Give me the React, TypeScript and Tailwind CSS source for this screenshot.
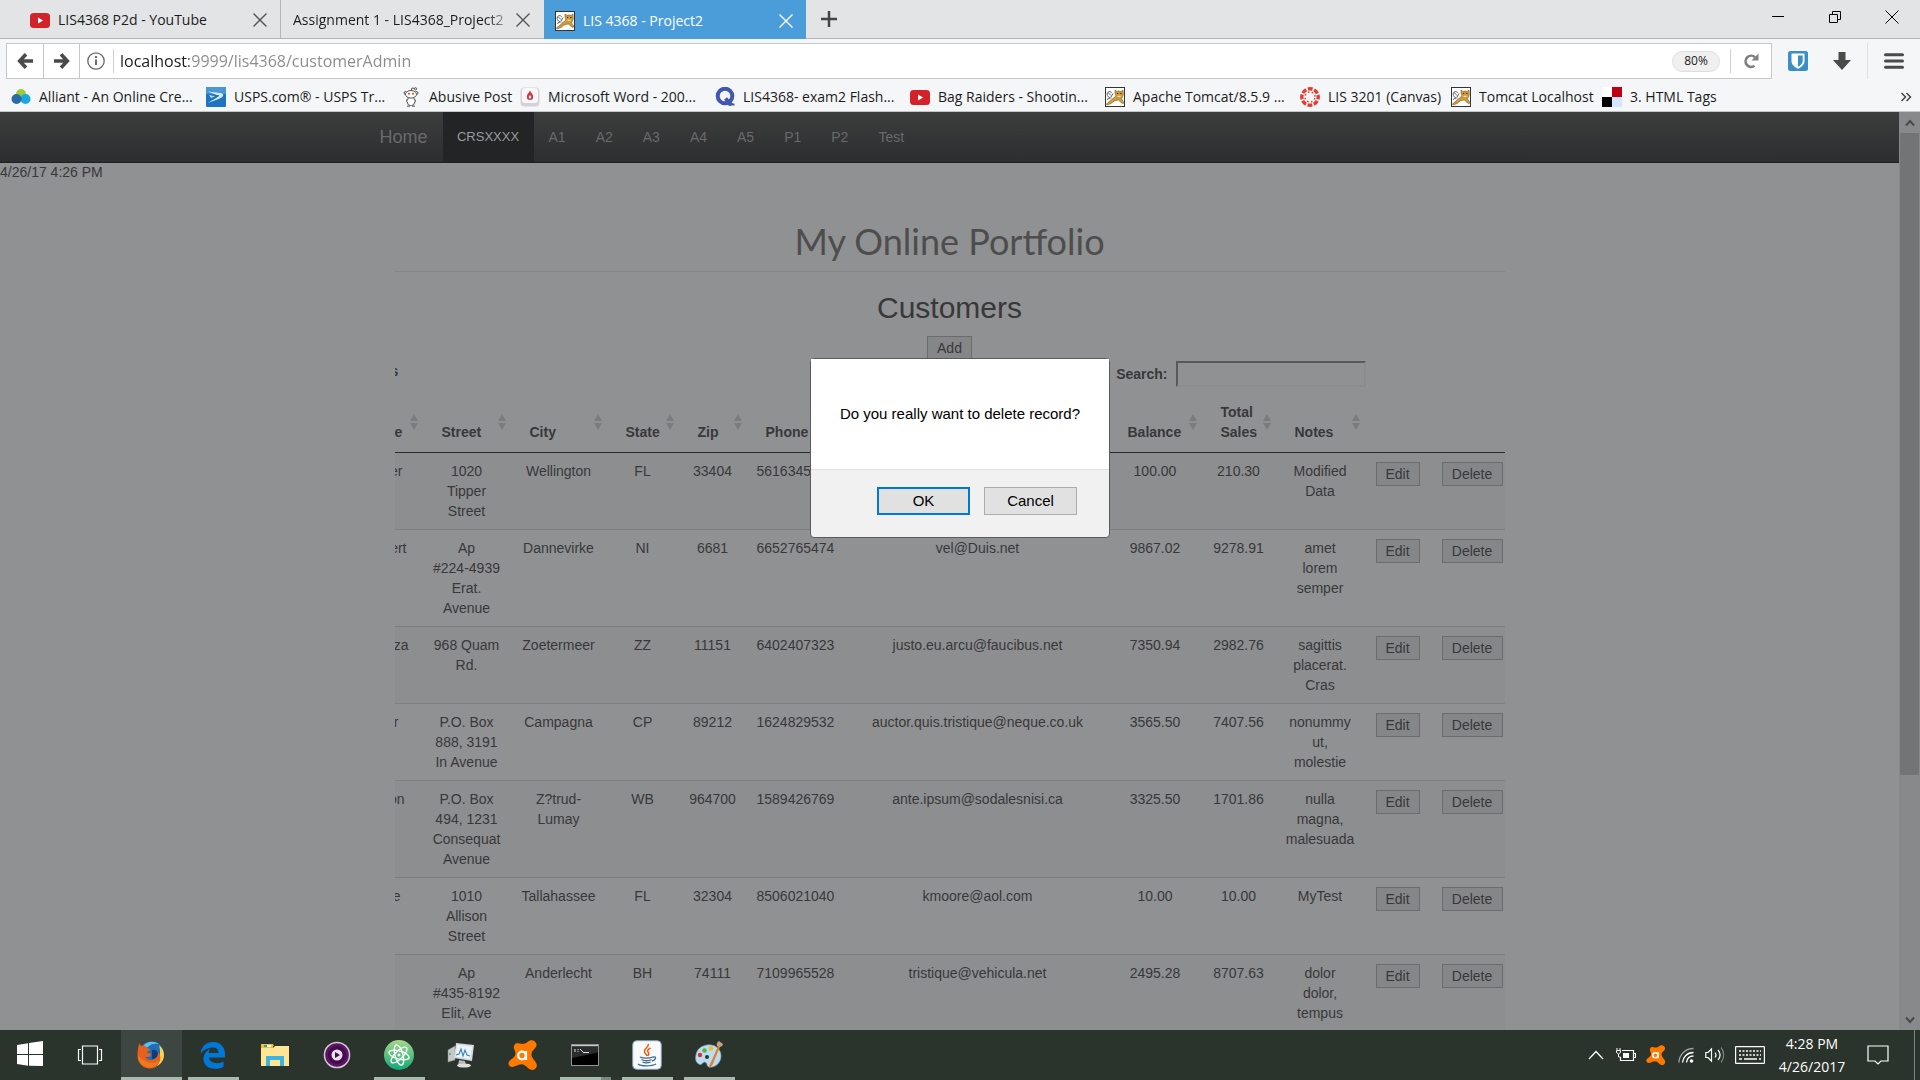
import React from "react";

type IconProps = { className?: string };

const YouTubeIcon = () => (
  <svg viewBox="0 0 20 15" className="h-[15px] w-5 shrink-0" aria-hidden="true">
    <rect width="20" height="15" rx="3.5" fill="#d3222a" />
    <path d="M8 4.5v6l5-3z" fill="#fff" />
  </svg>
);

const TomcatIcon = () => (
  <svg viewBox="0 0 20 20" className="size-5 shrink-0" aria-hidden="true">
    <rect x="0.5" y="0.5" width="19" height="19" fill="#fff" stroke="#333" />
    <path d="M6.500 11C3 11 1.500 8 2.500 6S6 4 6.500 6M3 5.500l3 3M8 6.500L6 10M2 12.500l3-1.500" fill="none" stroke="#4a4a4a" strokeWidth="0.9" />
    <path d="M10 3l2 1.500c1-.6 3-.6 4 0L18 3l.3 4c0 2-1 3.500-2 4.500l3 4.500-2 .5-4-3.500c-3 .5-5 1-7 3.500L2 18l-.5-1.200L5 14l4-3.500 2-1.500C10 7.500 9.800 5 10 3z" fill="#d09a3a" stroke="#6b4f1e" strokeWidth="0.5" />
    <path d="M12 6.500h1.200M15.200 6.500h1.200" stroke="#222" strokeWidth="1.100" />
    <path d="M12.500 9.300h3" stroke="#fff" strokeWidth="0.9" />
  </svg>
);

const AlliantIcon = () => (
  <svg viewBox="0 0 20 20" className="size-5 shrink-0" aria-hidden="true">
    <circle cx="10" cy="7" r="5" fill="#9ccb3c" />
    <circle cx="5.500" cy="12" r="5" fill="#2f68a6" />
    <circle cx="14.500" cy="12" r="5" fill="#1aa7e0" />
    <path d="M10 9.800a5 5 0 0 1 0 4.600a5 5 0 0 1 0-4.600z" fill="#1c4f87" />
  </svg>
);

const UspsIcon = () => (
  <svg viewBox="0 0 20 20" className="size-5 shrink-0" aria-hidden="true">
    <rect width="20" height="20" rx="1" fill="#1f74c0" />
    <rect width="20" height="7" rx="1" fill="#4b97d6" />
    <path d="M2 4.500l12 1.500c4 .6 4 3 1.500 4.500C12 12.500 7 14 2 16c4-2.800 7.500-4.500 10.500-6.500 1.500-1.300 0-1.500-2-1.500z" fill="#d6e9f7" />
    <path d="M3 8l6 1.300-4 1.700z" fill="#bcdcf3" />
  </svg>
);

const RedditIcon = () => (
  <svg viewBox="0 0 20 20" className="size-5 shrink-0" fill="#fff" stroke="#444" strokeWidth="0.9" aria-hidden="true">
    <path d="M10 4l1-3 3 .5" fill="none" />
    <circle cx="14.500" cy="1.800" r="1.100" />
    <circle cx="4.500" cy="6" r="1.500" />
    <circle cx="15.500" cy="6" r="1.500" />
    <rect x="6.500" y="10" width="7" height="8.500" rx="3" />
    <ellipse cx="10" cy="7.300" rx="5.500" ry="3.800" />
    <path d="M6 19.200h3M11 19.200h3M6.500 12c-1.500 1-1 4 .3 4M13.500 12c1.500 1 1 4-.3 4" />
    <circle cx="8" cy="6.800" r="1" fill="#ff4500" stroke="none" />
    <circle cx="12" cy="6.800" r="1" fill="#ff4500" stroke="none" />
  </svg>
);

const WordIcon = () => (
  <svg viewBox="0 0 20 20" className="size-5 shrink-0" aria-hidden="true">
    <rect x="0.500" y="0.500" width="19" height="19" rx="4" fill="#d3d2da" />
    <rect x="2" y="1" width="16" height="15" rx="3" fill="#f7f6f8" />
    <path d="M10 3.500c1 2.500 3.200 3.600 3.200 6.200a3.200 3.200 0 0 1-6.400 0C6.800 7.100 9 6 10 3.500z" fill="#c93b40" />
    <path d="M10 8c.6 1 1.200 1.300 1.200 2.300a1.200 1.200 0 0 1-2.400 0C8.800 9.300 9.400 9 10 8z" fill="#fff" />
  </svg>
);

const QuizletIcon = () => (
  <svg viewBox="0 0 20 20" className="size-5 shrink-0" fill="none" stroke="#4257b2" strokeWidth="4" aria-hidden="true">
    <circle cx="10" cy="9" r="7.300" />
    <path d="M10.500 11.500l6 6.500" />
    <path d="M13 17.500h6.500" strokeWidth="2" />
  </svg>
);

const CanvasIcon = () => (
  <svg viewBox="0 0 20 20" className="size-5 shrink-0" aria-hidden="true">
    <circle cx="10" cy="10" r="8.200" fill="none" stroke="#e8392f" strokeWidth="3.400" strokeDasharray="4.800 1.640" strokeDashoffset="2.400" />
    <circle cx="10" cy="10" r="5" fill="none" stroke="#e8392f" strokeWidth="1.500" strokeDasharray="1.500 2.427" strokeDashoffset="-1.200" />
  </svg>
);

const TagsIcon = () => (
  <svg viewBox="0 0 20 20" className="size-5 shrink-0" aria-hidden="true">
    <rect width="10" height="10" fill="#fff" />
    <rect x="10" width="10" height="10" fill="#c00012" />
    <rect y="10" width="10" height="10" fill="#000" />
    <rect x="10" y="10" width="10" height="10" fill="#d3e4fd" />
  </svg>
);

const CloseIcon = ({ className = "" }: IconProps) => (
  <svg viewBox="0 0 14 14" className={"size-[14px] shrink-0 " + className} fill="none" stroke="currentColor" strokeWidth="1.400" aria-hidden="true">
    <path d="M0.500 0.500l13 13M13.500 0.500l-13 13" />
  </svg>
);

const ArrowIcon = ({ className = "" }: IconProps) => (
  <svg viewBox="0 0 16 16" className={"size-4 " + className} fill="none" stroke="#4a4a4a" strokeWidth="3.600" aria-hidden="true">
    <path d="M9 1.200L2.700 8 9 14.800M3.500 8H16" />
  </svg>
);

const bookmarks = [
  { label: "Alliant - An Online Cre...", icon: AlliantIcon, width: "w-[195px]" },
  { label: "USPS.com® - USPS Tr...", icon: UspsIcon, width: "w-[195px]" },
  { label: "Abusive Post", icon: RedditIcon, width: "w-[119px]" },
  { label: "Microsoft Word - 200...", icon: WordIcon, width: "w-[195px]" },
  { label: "LIS4368- exam2 Flash...", icon: QuizletIcon, width: "w-[195px]" },
  { label: "Bag Raiders - Shootin...", icon: YouTubeIcon, width: "w-[195px]" },
  { label: "Apache Tomcat/8.5.9 ...", icon: TomcatIcon, width: "w-[195px]" },
  { label: "LIS 3201 (Canvas)", icon: CanvasIcon, width: "w-[151px]" },
  { label: "Tomcat Localhost", icon: TomcatIcon, width: "w-[151px]" },
  { label: "3. HTML Tags", icon: TagsIcon, width: "w-[120px]" },
];

function TabBar() {
  return (
    <div className="flex h-[39px] items-stretch border-b border-[#b4b5b8] bg-[#e3e4e6] text-sm text-[#1c1c1c]">
      <div className="flex w-[281px] items-center border-r border-[#b4b5b8] pl-[30px] pr-[13px] pt-0.5">
        <YouTubeIcon />
        <span className="ml-2 flex-1 whitespace-nowrap">LIS4368 P2d - YouTube</span>
        <button aria-label="Close tab" className="text-[#555]"><CloseIcon /></button>
      </div>
      <div className="flex w-[263px] items-center pl-3 pr-[14px] pt-0.5">
        <span className="mr-2 flex-1 overflow-hidden whitespace-nowrap bg-linear-to-r from-[#1c1c1c] from-90% to-[#b8b8b8] bg-clip-text text-transparent">Assignment 1 - LIS4368_Project2</span>
        <button aria-label="Close tab" className="text-[#555]"><CloseIcon /></button>
      </div>
      <div className="-mb-px flex w-[262px] items-center bg-[#4b9dd9] pl-[11px] pr-[13px] pt-0.5 text-white">
        <TomcatIcon />
        <span className="ml-2 flex-1 whitespace-nowrap">LIS 4368 - Project2</span>
        <button aria-label="Close tab"><CloseIcon /></button>
      </div>
      <button aria-label="New tab" className="ml-[15px]">
        <svg viewBox="0 0 16 16" className="size-4" stroke="#444" strokeWidth="2.500" aria-hidden="true"><path d="M8 0v16M0 8h16" /></svg>
      </button>
      <div className="ml-auto flex items-center gap-[43px] pb-1 pr-[21px]">
        <button aria-label="Minimize">
          <svg viewBox="0 0 14 14" className="size-[14px]" stroke="#000" aria-hidden="true"><path d="M1 6.500h12" /></svg>
        </button>
        <button aria-label="Restore">
          <svg viewBox="0 0 14 14" className="size-[14px]" fill="none" stroke="#000" aria-hidden="true"><path d="M1.500 4.500h8v8h-8zM4.500 4V1.500h8v8H10" /></svg>
        </button>
        <button aria-label="Close window">
          <svg viewBox="0 0 14 14" className="size-[14px]" fill="none" stroke="#000" aria-hidden="true"><path d="M0.500 0.500l13 13M13.500 0.500l-13 13" /></svg>
        </button>
      </div>
    </div>
  );
}

function Toolbar() {
  return (
    <div className="flex h-11 items-start bg-[#f5f6f8] pl-1.5 pt-1">
      <div className="flex h-9 flex-1 items-center border border-[#c6c7c9] bg-white">
        <button aria-label="Back" className="flex h-full w-[37px] items-center justify-center border-r border-[#c6c7c9]"><ArrowIcon /></button>
        <button aria-label="Forward" className="flex h-full w-9 items-center justify-center border-r border-[#c6c7c9]"><ArrowIcon className="rotate-180" /></button>
        <svg viewBox="0 0 18 18" className="ml-[7px] size-[18px]" fill="none" stroke="#6a6a6a" strokeWidth="1.300" aria-hidden="true">
          <circle cx="9" cy="9" r="8.200" /><path d="M9 7.500v5.500M9 4v2" strokeWidth="2" />
        </svg>
        <div className="ml-2 h-6 w-px bg-[#d0d0d0]" />
        <input
          type="text"
          aria-label="Address"
          defaultValue="localhost:9999/lis4368/customerAdmin"
          className="ml-1.5 h-8 flex-1 bg-[linear-gradient(90deg,#1c1c1c_69px,#8a8a8a_69px)] bg-clip-text text-base text-transparent outline-none"
        />
        <button className="h-[21px] w-12 rounded-full border border-[#dedede] bg-[#f0f0f0] text-xs leading-none text-[#222]">80%</button>
        <div className="ml-2.5 h-6 w-px bg-[#d0d0d0]" />
        <button aria-label="Reload" className="ml-3">
          <svg viewBox="0 0 16 16" className="size-4" fill="none" stroke="#808080" strokeWidth="2.600" aria-hidden="true">
            <path d="M11.500 12.800A5.600 5.600 0 1 1 12 4.200" /><path d="M15.500 0.500v7h-7z" fill="#808080" stroke="none" />
          </svg>
        </button>
        <div className="w-3" />
      </div>
      <div className="flex h-9 items-center pl-4">
        <button aria-label="Password manager">
          <svg viewBox="0 0 20 20" className="size-5" aria-hidden="true">
            <rect width="20" height="20" rx="2.500" fill="#3b8fc6" />
            <path d="M3.500 2.500h13V10c0 4-3.500 6.300-6.500 7.800C7 16.300 3.500 14 3.500 10z" fill="#fff" />
            <path d="M5.300 4.300H10v11.500c-2.500-1.300-4.700-3.300-4.700-5.800z" fill="#fff" />
            <path d="M10 4.500h4.700V10c0 2.500-2.200 4.500-4.700 5.800z" fill="#3b8fc6" />
          </svg>
        </button>
        <button aria-label="Downloads" className="ml-[25px]">
          <svg viewBox="0 0 18 18" className="size-[18px]" fill="#4a4a4a" aria-hidden="true"><path d="M5.500 0h7v8H18l-9 10L0 8h5.500z" /></svg>
        </button>
        <div className="ml-4 h-9 w-px bg-[#e0e0e2]" />
        <button aria-label="Menu" className="ml-4 mr-4">
          <svg viewBox="0 0 20 16" className="h-4 w-5" stroke="#4a4a4a" strokeWidth="3" strokeLinecap="round" aria-hidden="true"><path d="M1.500 1.700h17M1.500 8h17M1.500 14.300h17" /></svg>
        </button>
      </div>
    </div>
  );
}

function BookmarkBar() {
  return (
    <div className="flex h-[29px] items-center border-b border-[#c4c5c7] bg-[#f5f6f8] pl-[11px] pr-2 text-sm text-[#1c1c1c]">
      {bookmarks.map(({ label, icon: Icon, width }) => (
        <a key={label} href="#" className={"flex shrink-0 items-center gap-2 whitespace-nowrap " + width}>
          <Icon />
          {label}
        </a>
      ))}
      <button aria-label="More bookmarks" className="ml-auto">
        <svg viewBox="0 0 12 10" className="h-2.5 w-3" fill="none" stroke="#444" strokeWidth="1.500" aria-hidden="true"><path d="M1.500 1l4 4-4 4M6.500 1l4 4-4 4" /></svg>
      </button>
    </div>
  );
}

type Customer = {
  name: string;
  nameEnd: string;
  street: string;
  city: string;
  state: string;
  zip: string;
  phone: string;
  email: string;
  balance: string;
  sales: string;
  notes: string;
};

const customers: Customer[] = [
  { name: "er", nameEnd: "pr-5", street: "1020\nTipper\nStreet", city: "Wellington", state: "FL", zip: "33404", phone: "5616345", email: "", balance: "100.00", sales: "210.30", notes: "Modified\nData" },
  { name: "ert", nameEnd: "pr-4", street: "Ap\n#224-4939\nErat.\nAvenue", city: "Dannevirke", state: "NI", zip: "6681", phone: "6652765474", email: "vel@Duis.net", balance: "9867.02", sales: "9278.91", notes: "amet\nlorem\nsemper" },
  { name: "za", nameEnd: "pr-[14px]", street: "968 Quam\nRd.", city: "Zoetermeer", state: "ZZ", zip: "11151", phone: "6402407323", email: "justo.eu.arcu@faucibus.net", balance: "7350.94", sales: "2982.76", notes: "sagittis\nplacerat.\nCras" },
  { name: "r", nameEnd: "pr-6", street: "P.O. Box\n888, 3191\nIn Avenue", city: "Campagna", state: "CP", zip: "89212", phone: "1624829532", email: "auctor.quis.tristique@neque.co.uk", balance: "3565.50", sales: "7407.56", notes: "nonummy\nut,\nmolestie" },
  { name: "on", nameEnd: "pr-[18px]", street: "P.O. Box\n494, 1231\nConsequat\nAvenue", city: "Z?trud-\nLumay", state: "WB", zip: "964700", phone: "1589426769", email: "ante.ipsum@sodalesnisi.ca", balance: "3325.50", sales: "1701.86", notes: "nulla\nmagna,\nmalesuada" },
  { name: "e", nameEnd: "pr-[22px]", street: "1010\nAllison\nStreet", city: "Tallahassee", state: "FL", zip: "32304", phone: "8506021040", email: "kmoore@aol.com", balance: "10.00", sales: "10.00", notes: "MyTest" },
  { name: "", nameEnd: "pr-5", street: "Ap\n#435-8192\nElit, Ave", city: "Anderlecht", state: "BH", zip: "74111", phone: "7109965528", email: "tristique@vehicula.net", balance: "2495.28", sales: "8707.63", notes: "dolor\ndolor,\ntempus" },
];

const SortIcon = () => (
  <svg viewBox="0 0 8 16" className="h-4 w-2 shrink-0" fill="#7b7c7d" aria-hidden="true"><path d="M4 0l4 7H0zM4 16l4-7H0z" /></svg>
);

function HeaderCell({ label }: { label: string }) {
  return (
    <th scope="col" className="py-2.5 pl-[19px] pr-[5px]">
      <div className="flex h-10 items-center justify-between">
        <span className="self-end text-left">{label}</span>
        <SortIcon />
      </div>
    </th>
  );
}

function GreyButton({ children, className = "" }: { children: React.ReactNode; className?: string }) {
  return (
    <button className={"h-6 border border-[#6b6c6c] bg-[#858687] text-center leading-5 " + className}>{children}</button>
  );
}

function CustomerTable() {
  return (
    <table className="w-full table-fixed border-collapse text-center">
      <colgroup>
        <col className="w-7" />
        <col className="w-[88px]" />
        <col className="w-24" />
        <col className="w-[72px]" />
        <col className="w-[68px]" />
        <col className="w-[100px]" />
        <col />
        <col className="w-[93px]" />
        <col className="w-[74px]" />
        <col className="w-[89px]" />
        <col className="w-[66px]" />
        <col className="w-[74px]" />
      </colgroup>
      <thead>
        <tr className="border-b border-[#2c2c2c]">
          <th scope="col" className="py-2.5 pr-[5px]">
            <div className="flex h-10 items-center justify-between">
              <span className="self-end">e</span>
              <SortIcon />
            </div>
          </th>
          {["Street", "City", "State", "Zip", "Phone", "Email", "Balance", "Total Sales", "Notes"].map((label) => (
            <HeaderCell key={label} label={label} />
          ))}
          <th />
          <th />
        </tr>
      </thead>
      <tbody className="whitespace-pre-line">
        {customers.map((c) => (
          <tr key={c.street} className="border-t border-[#7e7f80] align-top odd:bg-[#8d8e8f] first:border-t-0">
            <td className="py-2">
              <div className={"flex justify-end " + c.nameEnd}>{c.name}</div>
            </td>
            <td className="p-2">{c.street}</td>
            <td className="p-2">{c.city}</td>
            <td className="p-2">{c.state}</td>
            <td className="p-2">{c.zip}</td>
            <td className="px-2.5 py-2 text-left">{c.phone}</td>
            <td className="p-2">{c.email}</td>
            <td className="p-2">{c.balance}</td>
            <td className="p-2">{c.sales}</td>
            <td className="p-2">{c.notes}</td>
            <td className="pt-[9px]"><GreyButton className="w-11">Edit</GreyButton></td>
            <td className="pl-[11px] pt-[9px] text-left"><GreyButton className="w-[61px]">Delete</GreyButton></td>
          </tr>
        ))}
      </tbody>
    </table>
  );
}

function Page() {
  return (
    <main className="flex min-h-0 flex-1 bg-[#909192] text-sm leading-5 text-[#38383a] [font-family:'Liberation_Sans',Arial,sans-serif]">
      <div className="min-w-0 flex-1 overflow-hidden">
        <nav className="h-[51px] border-b border-[#1f2021] bg-linear-to-b from-[#3c3d3d] to-[#2d2e2f] text-[#696a6b]">
          <div className="mx-auto flex h-full max-w-[1170px] items-center">
            <a href="#" className="px-[15px] text-lg">Home</a>
            <a href="#" className="flex h-full w-[91px] items-center justify-center bg-[#232425] text-[13px] text-[#9a9b9c]">CRSXXXX</a>
            {["A1", "A2", "A3", "A4", "A5", "P1", "P2", "Test"].map((item) => (
              <a key={item} href="#" className="px-[15px]">{item}</a>
            ))}
          </div>
        </nav>
        <p className="leading-[18px]">4/26/17 4:26 PM</p>
        <div className="mx-auto max-w-[1110px] overflow-hidden">
          <h1 className="mt-10 border-b border-[#838485] pb-2.5 text-center text-[36px] leading-10 text-[#4d4d4e] [font-family:Lato,'Open_Sans',sans-serif]">My Online Portfolio</h1>
          <h2 className="mt-5 text-center text-3xl leading-8">Customers</h2>
          <div className="mt-3 flex justify-center">
            <GreyButton className="w-[45px]">Add</GreyButton>
          </div>
          <div className="mt-px flex items-center justify-between pr-[139px] font-bold">
            <span className="-ml-1 pb-1.5">s</span>
            <label className="flex items-center gap-2">
              Search:
              <input type="search" className="h-[26px] w-[190px] border-2 border-b-[#8b8c8d] border-l-[#58595a] border-r-[#8b8c8d] border-t-[#58595a] bg-transparent" />
            </label>
          </div>
          <div className="mt-[5px]">
            <CustomerTable />
          </div>
        </div>
      </div>
      <div className="flex w-[21px] flex-col items-center bg-[#88898a]">
        <div className="flex h-[21px] items-center">
          <svg viewBox="0 0 10 8" className="h-2 w-2.5" fill="none" stroke="#48494a" strokeWidth="2" aria-hidden="true"><path d="M1 6.500l4-4.500 4 4.500" /></svg>
        </div>
        <div className="h-[642px] w-[19px] bg-[#737475]" />
        <div className="mt-auto flex h-[21px] items-center">
          <svg viewBox="0 0 10 8" className="h-2 w-2.5" fill="none" stroke="#48494a" strokeWidth="2" aria-hidden="true"><path d="M1 1.500l4 4.500 4-4.500" /></svg>
        </div>
      </div>
    </main>
  );
}

function ConfirmDialog() {
  return (
    <div role="dialog" aria-label="Confirm delete" className="absolute inset-x-0 top-[358px] mx-auto w-[300px] rounded-sm border border-[#5a5b5c] bg-[#f1f1f1] text-[15px] text-black [font-family:'Liberation_Sans',Arial,sans-serif]">
      <p className="h-[111px] whitespace-nowrap border-b border-[#dfdfdf] bg-white pt-[45px] text-center leading-5">Do you really want to delete record?</p>
      <div className="flex justify-end gap-3.5 px-8 pb-[22px] pt-[17px]">
        <button className="h-7 w-[93px] border-2 border-[#0078d7] bg-[#e1e1e1] pb-0.5 leading-none">OK</button>
        <button className="h-7 w-[93px] border border-[#adadad] bg-[#e1e1e1] pb-0.5 leading-none">Cancel</button>
      </div>
    </div>
  );
}

const StartIcon = () => (
  <svg viewBox="0 0 28 28" className="size-7" fill="#fff" aria-hidden="true"><path d="M1 4l11-1.700V13H1zM13 2.100L27 0v13H13zM1 14h11v10.700L1 23zM13 14h14v11L13 24.800z" /></svg>
);

const TaskViewIcon = () => (
  <svg viewBox="0 0 26 20" className="h-5 w-[26px]" fill="none" stroke="#fff" aria-hidden="true"><path d="M5.500 1h15v18h-15zM4 4.500H1.500v11H4M22 4.500h2.500v11H22" strokeWidth="1.200" /></svg>
);

const FirefoxIcon = () => (
  <svg viewBox="0 0 28 28" className="size-7" aria-hidden="true">
    <circle cx="14.500" cy="13" r="12.500" fill="#1e6fb5" />
    <path d="M6 5c3-4 10-6 16-2-5-1-9 0-11 3-1 1-4 0-5-1z" fill="#5bc0ea" />
    <path d="M15 9c2-1 5 0 6 3 0 3-2 6-6 6z" fill="#123a78" />
    <path d="M22 4c6 5 7 13 1 19-3 3-9 4-12 2 8-1 12-6 12-12 0-3 0-6-1-9z" fill="#fbd34d" />
    <path d="M3 2c0 2 1 3 2 3 2-1 4 0 5 2l3 1c0 2-3 2-3 4 1 0 3 0 4 1-1 4-4 3-6 3 3 4 9 4 12 0 1-2 1-4 1-5 3 3 3 8 1 11-2 4-6 6-10 5.500C5 27 0 21 .5 14 .5 9 1 5 3 2z" fill="#e8611c" />
    <path d="M1 14c0 7 5 12.500 12 12.500 4 0 8-2.500 9-6.500-6 4-16 2-21-6z" fill="#f0781d" />
  </svg>
);

const EdgeIcon = () => (
  <svg viewBox="0 0 26 28" className="h-7 w-[26px]" fill="#0078d7" aria-hidden="true">
    <path d="M.5 12.500C1.500 5 6.500 1 13 1c8 0 12 5.500 12 12.500v3H9c.3 4 4 5.700 8 5.700 3 0 5-.8 6.500-1.700v5.300c-2.500 1.400-5.500 2-8.500 2C8 27.800 3.500 23.500 3.500 18c0-5 3-8.500 7-10.300C9 9 8.700 11 8.700 12h9.800c0-3.500-2-5.500-5.500-5.500-5 0-9.500 2.500-12.500 6z" />
  </svg>
);

const ExplorerIcon = () => (
  <svg viewBox="0 0 28 24" className="h-6 w-7" aria-hidden="true">
    <path d="M0 1h12l1 2h-1v3H0z" fill="#f5c02e" /><path d="M3 2h7v2H3z" fill="#fff" /><path d="M3 2h3v2H3z" fill="#2b9fd8" />
    <path d="M0 5h12l2-2h14v20H0z" fill="#ffe594" />
    <path d="M5 13h18v10h-4v-6H9v6H5z" fill="#3bb4e4" />
  </svg>
);

const PlayerIcon = () => (
  <svg viewBox="0 0 28 28" className="size-7" aria-hidden="true">
    <circle cx="14" cy="14" r="13.300" fill="#d4c7d8" /><circle cx="14" cy="14" r="11.800" fill="#5c1560" /><circle cx="14" cy="14" r="9" fill="#450a4d" />
    <circle cx="14" cy="14" r="5.500" fill="#e8e0ea" /><path d="M12 11v6l5-3z" fill="#450a4d" />
  </svg>
);

const AtomIcon = () => (
  <svg viewBox="0 0 30 30" className="size-[30px]" aria-hidden="true">
    <defs><linearGradient id="atom" x1="0" y1="0" x2="0" y2="1"><stop offset="0" stopColor="#a5d98b" /><stop offset="1" stopColor="#12a878" /></linearGradient></defs>
    <circle cx="15" cy="15" r="15" fill="url(#atom)" />
    <g fill="none" stroke="#fff" strokeWidth="1.300">
      <ellipse cx="15" cy="15" rx="10.500" ry="4" transform="rotate(15 15 15)" />
      <ellipse cx="15" cy="15" rx="10.500" ry="4" transform="rotate(75 15 15)" />
      <ellipse cx="15" cy="15" rx="10.500" ry="4" transform="rotate(135 15 15)" />
    </g>
    <circle cx="15" cy="15" r="1.500" fill="#fff" />
  </svg>
);

const MonitorIcon = () => (
  <svg viewBox="0 0 28 26" className="h-[26px] w-7" aria-hidden="true">
    <path d="M1 8l7-4v14l-7 2z" fill="#c5c7c8" stroke="#8a8c8d" strokeWidth="0.500" />
    <path d="M12 18l6 1 1 4-8 1z" fill="#b5b7b8" /><ellipse cx="17" cy="23.500" rx="7" ry="2" fill="#dcdddd" />
    <path d="M9 1l18 2-2 16-18-3z" fill="#d9dadb" /><path d="M10 3l15 1.500-1.700 12.500L8.500 14.500z" fill="#eaf4fb" />
    <path d="M9 13l3-1 2-5 2 7 2-6 2 5 3 1" fill="none" stroke="#3b84b5" strokeWidth="1.100" />
    <path d="M2 12h2" stroke="#3fb54a" strokeWidth="1.500" />
  </svg>
);

const AvastIcon = ({ className = "size-[30px]" }: IconProps) => (
  <svg viewBox="0 0 30 30" className={className} aria-hidden="true">
    <path d="M6.500 5c1-2.500 3-1.800 5-1.500 3 .7 6 .5 8-1.500 3-3 8-2 9 2 .6 3-2 5-4 7-2 3-1 6 1.500 9 2 2.500 4 5 2 8-2 3-6 2-8 0-4-4-6-4.500-10-3-3 1.200-6 3-8.500 1-2.500-3 0-5.500 3-7.500C8 16 8 13 6.500 10c-1-2-1-3.500 0-5z" fill="#ff7800" />
    <circle cx="14" cy="15.500" r="3.800" fill="none" stroke="#fff" strokeWidth="2.200" /><path d="M18 11v9" stroke="#fff" strokeWidth="2.200" />
  </svg>
);

const TerminalIcon = () => (
  <svg viewBox="0 0 28 22" className="h-[22px] w-7" aria-hidden="true">
    <rect x="0.500" y="0.500" width="27" height="21" fill="#000" stroke="#8f9496" /><path d="M1 1h26v1.500H1z" fill="#c6c9ca" />
    <path d="M1 2.500h26v6L1 14z" fill="#2a2c2d" />
    <path d="M4 5v3M7 5v1M7 7v1M9 5l3 3M12 8.500h6" stroke="#ddd" strokeWidth="1" />
  </svg>
);

const JavaIcon = () => (
  <svg viewBox="0 0 30 30" className="size-[30px]" fill="none" aria-hidden="true">
    <rect x="0.700" y="0.700" width="28.600" height="28.600" rx="4" fill="#f8f9fa" stroke="#88a0b4" />
    <path d="M16 4c2 3-6 5-3 9 1 1 2 2 2 3M18.500 8c-4 2-3 3-2 5 1 1 0 2-1 3" stroke="#ea5b0c" strokeWidth="1.500" />
    <path d="M8 17c3 1.500 9 1.500 13 0M9.500 19.500c3 1.500 7 1.500 10 0M10.500 22c3 1.200 5 1.200 8 0M6 24c3 2.500 14 2.500 18 0M21 17c4-1 3 3-1 4" stroke="#3b6a8f" strokeWidth="1.300" />
  </svg>
);

const PaintIcon = () => (
  <svg viewBox="0 0 30 30" className="size-[30px]" aria-hidden="true">
    <path d="M13 5c8-1 14 4 14 11S21 28 15 27c-3-1-1-4-4-5-3 0-3 4-6 2-3-1-4-5-3-9 1-6 5-9 11-10z" fill="#bcdcf0" stroke="#7fa6c0" strokeWidth="0.700" />
    <circle cx="6" cy="15" r="2.200" fill="#d9322e" /><circle cx="10.500" cy="10.500" r="2.300" fill="#57b33e" /><circle cx="17" cy="8.500" r="2.300" fill="#f4b92c" /><circle cx="13" cy="17" r="2" fill="#2b332d" />
    <path d="M15 28c0-3 1-4 3-8L24 6l2 1-6 14c-1 4-3 6-5 7z" fill="#e0802a" />
    <path d="M23 6c-1-2 0-4 2-5l4 3c0 2-2 3-4 3z" fill="#c3a27d" />
  </svg>
);

const apps = [
  { name: "Firefox", icon: FirefoxIcon, state: "active" },
  { name: "Edge", icon: EdgeIcon, state: "open" },
  { name: "File Explorer", icon: ExplorerIcon, state: "" },
  { name: "Media player", icon: PlayerIcon, state: "" },
  { name: "Atom", icon: AtomIcon, state: "open" },
  { name: "Performance monitor", icon: MonitorIcon, state: "" },
  { name: "Avast", icon: AvastIcon, state: "" },
  { name: "Command prompt", icon: TerminalIcon, state: "stacked" },
  { name: "Java", icon: JavaIcon, state: "open" },
  { name: "Paint", icon: PaintIcon, state: "open" },
];

function Taskbar() {
  return (
    <footer className="flex h-[50px] shrink-0 items-stretch bg-[#2b332d] text-white">
      <button aria-label="Start" className="flex w-[60px] items-center justify-center"><StartIcon /></button>
      <button aria-label="Task view" className="mr-px flex w-[60px] items-center justify-center"><TaskViewIcon /></button>
      {apps.map(({ name, icon: Icon, state }) => (
        <button key={name} aria-label={name} className={"mr-px flex w-[61px] flex-col items-center " + (state === "active" ? "bg-[#3e4641]" : "")}>
          <span className="flex flex-1 items-center pr-px pt-0.5"><Icon /></span>
          {state === "active" && <span className="h-[3px] w-full bg-[#a6bbae]" />}
          {state === "open" && <span className="h-[3px] w-[51px] bg-[#a6bbae]" />}
          {state === "stacked" && <span className="h-[3px] w-[51px] border-r-[10px] border-[#7b8a80] bg-[#a6bbae]" />}
          {state === "" && <span className="h-[3px]" />}
        </button>
      ))}
      <div className="ml-auto flex items-center">
        <svg viewBox="0 0 16 10" className="h-2.5 w-4" fill="none" stroke="#fff" strokeWidth="1.300" aria-hidden="true"><path d="M1 9l7-7.500L15 9" /></svg>
        <svg viewBox="0 0 20 14" className="ml-3 h-3.5 w-5" fill="none" stroke="#fff" aria-hidden="true">
          <path d="M6 2.500h11.500v10H4.500V9M18 5.500h1.500v4H18" strokeWidth="1.200" /><path d="M7 5h6v5H7z" fill="#fff" stroke="none" /><path d="M1 0v2M4 0v2M.5 2.500h4v2l-2 1.500-2-1.500zM2.500 6v3h2" />
        </svg>
        <AvastIcon className="ml-2.5 size-5" />
        <svg viewBox="0 0 16 16" className="ml-3 size-4" fill="none" stroke="#fff" strokeWidth="1.300" aria-hidden="true">
          <path d="M1 15.500C1 8 7 1.500 15.500 1.500" stroke="#9aa19c" /><path d="M4.500 15.500C5 10 9 5.500 15.500 5.500M8.500 15.500c.5-4 3-6.500 7-6.500" /><circle cx="13.500" cy="14" r="1.800" fill="#fff" stroke="none" />
        </svg>
        <svg viewBox="0 0 20 18" className="ml-[11px] h-[18px] w-5" fill="none" stroke="#fff" strokeWidth="1.200" aria-hidden="true">
          <path d="M.8 6.500H3L6.500 3v12L3 11.500H.8zM10 6.500c1.200 1.500 1.200 3.500 0 5M13 4c2.500 3 2.500 7 0 10" /><path d="M16 1.500c3.500 4 3.500 11 0 15" stroke="#7b837e" />
        </svg>
        <svg viewBox="0 0 30 18" className="ml-2.5 h-[18px] w-[30px]" fill="none" stroke="#fff" aria-hidden="true">
          <rect x="0.600" y="0.600" width="28.800" height="16.800" rx="0.500" strokeWidth="1.200" /><path d="M4 5h22M4 9h22" strokeDasharray="2 1.500" strokeWidth="1.500" /><path d="M4 13h3M9 13h13M24 13h2" strokeWidth="1.500" />
        </svg>
        <div className="w-[94px] text-center text-sm leading-[23px]">
          <div>4:28 PM</div>
          <div>4/26/2017</div>
        </div>
        <svg viewBox="0 0 22 20" className="ml-2 h-5 w-[22px]" fill="none" stroke="#fff" strokeWidth="1.200" aria-hidden="true"><path d="M1 1h20v15h-7l-3 3-3-3H1z" /></svg>
        <div className="ml-[25px] mr-[5px] h-[50px] w-px bg-[#7b837e]" />
      </div>
    </footer>
  );
}

export default function App() {
  return (
    <div className="relative flex h-screen flex-col overflow-hidden [font-family:'Open_Sans','Noto_Sans',sans-serif]">
      <header>
        <TabBar />
        <Toolbar />
        <BookmarkBar />
      </header>
      <Page />
      <Taskbar />
      <ConfirmDialog />
    </div>
  );
}
